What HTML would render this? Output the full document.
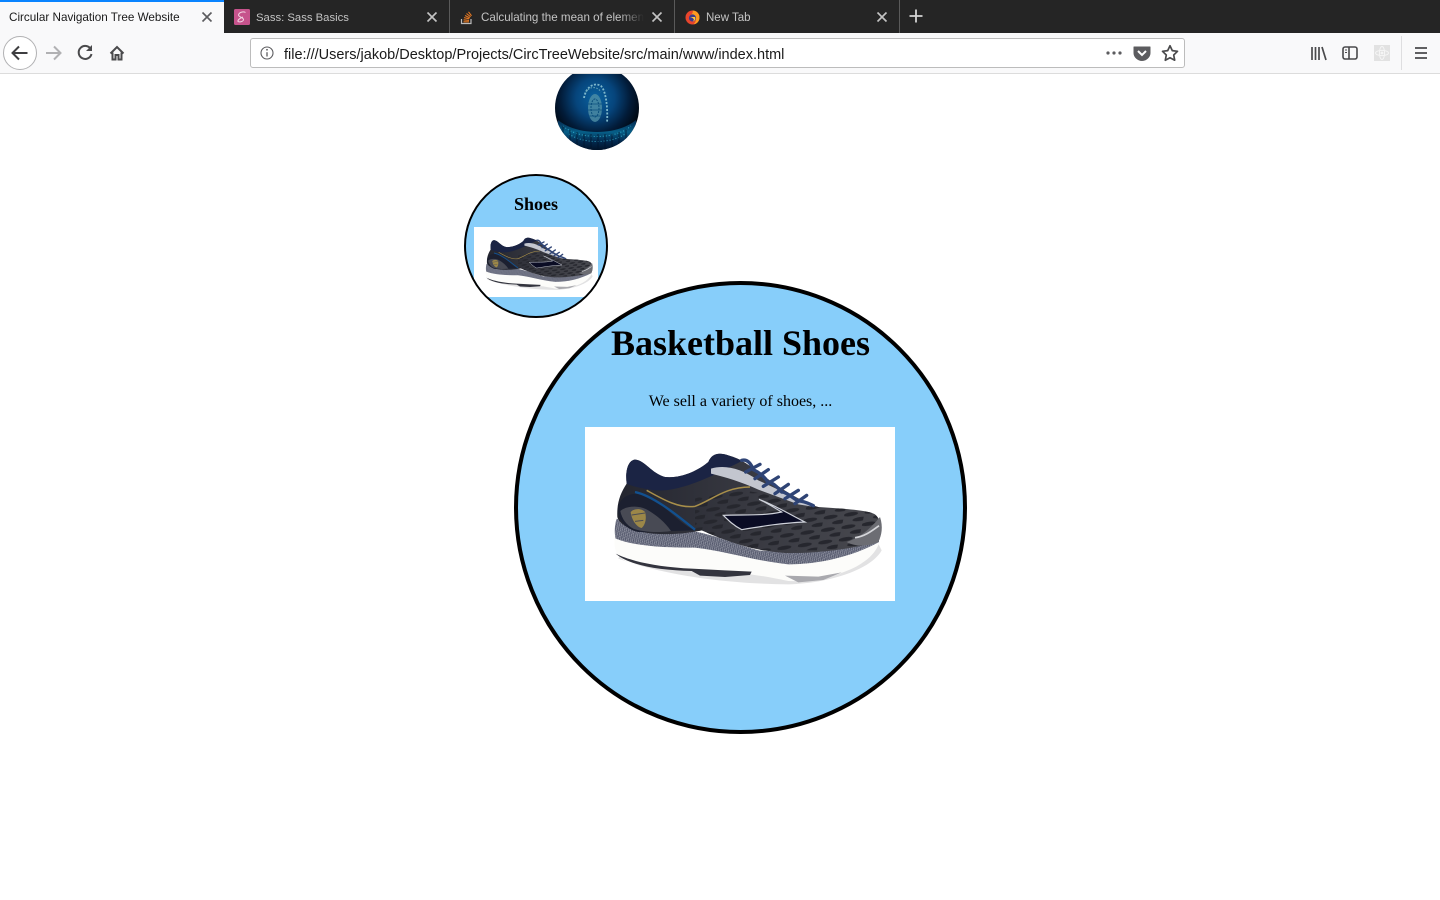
<!DOCTYPE html>
<html>
<head>
<meta charset="utf-8">
<title>Circular Navigation Tree Website</title>
<style>
html,body{margin:0;padding:0;width:1440px;height:900px;overflow:hidden;background:#fff}
body{position:relative;font-family:"Liberation Serif",serif;color:#000}
.abs{position:absolute}
.chrome{font-family:"Liberation Sans",sans-serif}
#strip{left:0;top:0;width:1440px;height:33px;background:#252525}
#tab1{left:0;top:0;width:224px;height:33px;background:#f9f9fa}
#tab1line{left:0;top:0;width:224px;height:2px;background:#0a84ff}
.tabt{position:absolute;top:11px;font-size:11.5px;line-height:14px;white-space:nowrap;color:#c4c4c4}
.sep{position:absolute;top:0;width:1px;height:33px;background:#5a5a5a}
#nav{left:0;top:33px;width:1440px;height:40px;background:#f9f9fa}
#navb{left:0;top:73px;width:1440px;height:1px;background:#dcdcdc;z-index:5}
#url{left:250px;top:38px;width:933px;height:28px;background:#fff;border:1px solid #bcbcbc;border-radius:3px}
#urlt{left:284px;top:47px;font-size:14.5px;line-height:17px;color:#1a1a1a;white-space:nowrap}
.c{position:absolute;border-radius:50%;background:#87cefa;border-style:solid;border-color:#000;box-sizing:border-box}
#big{left:514px;top:281px;width:453px;height:453px;border-width:4px}
#small{left:464px;top:174px;width:144px;height:144px;border-width:2px;overflow:hidden}
h1{position:absolute;margin:0;left:514px;width:453px;top:322px;text-align:center;font-size:36px;line-height:42px;font-weight:bold}
p{position:absolute;margin:0;left:514px;width:453px;top:392px;text-align:center;font-size:16px;line-height:19px}
h3{position:absolute;margin:0;left:464px;width:144px;top:193px;text-align:center;font-size:18px;line-height:22px;font-weight:bold}
.shoe{position:absolute;background:#fff;display:block}
#top{left:555px;top:66px;z-index:1}
svg{display:block}
</style>
</head>
<body>
<svg width="0" height="0" style="position:absolute">
<defs>
<linearGradient id="up" x1="0" x2="1" y1="0" y2="0"><stop offset="0" stop-color="#23252f"/><stop offset=".5" stop-color="#383941"/><stop offset="1" stop-color="#48494f"/></linearGradient>
<pattern id="mid" width="12" height="9" patternUnits="userSpaceOnUse" patternTransform="rotate(12)"><rect width="12" height="9" fill="#666a7c"/><path d="M0 2.5h6M6 7h6" stroke="#c4c6ce" stroke-width="2.5"/><path d="M3 0v4M9 4v5" stroke="#252a44" stroke-width="2"/></pattern>
<pattern id="cells" width="62" height="36" patternUnits="userSpaceOnUse" patternTransform="rotate(-8) skewX(-20)"><ellipse cx="20" cy="10" rx="22" ry="6" fill="#26272e"/><ellipse cx="51" cy="28" rx="22" ry="6" fill="#26272e"/></pattern>
<clipPath id="upclip"><path d="M97 270C95 230 105 200 125 170C120 130 130 100 150 98C180 100 200 140 240 150C290 155 340 130 370 105C380 80 400 75 430 85C470 95 500 120 540 150C590 185 640 220 700 240C780 245 850 250 870 262C890 280 895 310 880 345C800 365 700 380 600 378C500 370 430 345 350 310C280 325 200 325 150 310C120 300 100 285 97 270Z"/></clipPath>
<radialGradient id="glow" cx=".48" cy=".38" r=".58"><stop offset="0" stop-color="#0a62a0"/><stop offset=".4" stop-color="#06457c"/><stop offset=".72" stop-color="#021b38"/><stop offset="1" stop-color="#00040a"/></radialGradient>
<linearGradient id="floor" x1="0" x2="0" y1="0" y2="1"><stop offset="0" stop-color="#04284e"/><stop offset=".4" stop-color="#075f88"/><stop offset=".7" stop-color="#032a50"/><stop offset="1" stop-color="#01132a"/></linearGradient>
<symbol id="shoeart" viewBox="0 0 930 525">
<path d="M100 395C240 445 420 470 610 472C740 468 860 425 890 370L880 350L110 370Z" fill="#d8d8da" opacity=".75"/>
<path d="M90 325C84 362 92 390 130 406C220 430 320 428 420 436C500 440 540 448 610 462C680 466 765 445 815 418C850 398 872 378 884 345L600 372L300 330Z" fill="#fcfcfa"/>
<path d="M92 380C130 414 220 430 320 432L345 446L420 450L495 444L500 434L420 430L320 425C220 420 140 404 92 380Z" fill="#33343e"/>
<path d="M600 446L640 466L715 459L770 436L700 449Z" fill="#a9a9ae"/>
<path d="M95 275C88 295 88 320 92 335C150 358 240 362 330 362C420 372 500 400 610 412C700 412 800 390 882 345L880 330C760 355 620 380 520 370C430 345 370 315 300 310C220 315 150 310 95 275Z" fill="url(#mid)"/>
<path d="M97 270C95 230 105 200 125 170C120 130 130 100 150 98C180 100 200 140 240 150C290 155 340 130 370 105C380 80 400 75 430 85C470 95 500 120 540 150C590 185 640 220 700 240C780 245 850 250 870 262C890 280 895 310 880 345C800 365 700 380 600 378C500 370 430 345 350 310C280 325 200 325 150 310C120 300 100 285 97 270Z" fill="url(#up)"/>
<g clip-path="url(#upclip)"><path d="M330 215C420 180 520 180 620 235L880 250V370L500 370L330 310Z" fill="url(#cells)"/></g>
<path d="M125 170C120 130 130 100 150 98C180 100 200 140 240 150C290 155 340 130 370 105C380 80 400 75 430 85L470 100C470 105 420 125 395 140C340 165 270 195 210 190C175 185 145 180 125 170Z" fill="#1b2444"/>
<path d="M378 125C420 112 470 125 520 160L690 240L640 232L520 188C470 165 420 150 378 140Z" fill="#c3c6cf"/>
<path d="M470 100C490 95 500 115 505 128M505 128C520 135 540 150 548 165M548 165C565 165 580 185 590 195M590 195C605 195 625 215 640 222M640 222C660 222 675 232 685 236M482 135L525 112M510 155L550 128M535 178L580 150M570 200L610 172M600 215L640 190M630 230L665 205" stroke="#2f4475" stroke-width="10" stroke-linecap="round" fill="none"/>
<path d="M185 190C230 215 280 245 330 238C380 220 420 180 495 180" stroke="#a88f4a" stroke-width="4.5" fill="none"/>
<path d="M100 235C95 270 115 305 160 315L330 310C280 290 240 230 180 205C150 195 115 200 100 235Z" fill="#1c2030"/>
<path d="M106 252C125 235 165 235 190 250C215 265 240 285 258 312C220 318 170 315 145 305C125 295 110 275 106 252Z" fill="#484a54"/>
<path d="M150 195C200 205 265 255 330 308" stroke="#12508f" stroke-width="7" fill="none"/>
<path d="M137 255C150 242 172 245 180 255C186 275 180 295 170 303C155 300 140 280 137 255Z" fill="#9c8748"/><path d="M140 264L180 258M150 283L175 280" stroke="#4a4c55" stroke-width="3"/>
<path d="M415 265C470 262 530 268 590 255C565 240 540 225 522 217C570 235 620 265 660 285C590 288 530 298 470 308C445 295 430 280 415 265Z" fill="#0a0c24" stroke="#cfd2da" stroke-width="3.5"/>
<path d="M785 345C830 330 860 300 885 270C895 300 890 325 880 345C850 358 810 360 785 345Z" fill="#6c6d73"/>
<path d="M810 332C840 328 860 312 882 296" stroke="#d5d6da" stroke-width="5" fill="none"/>
</symbol>
</defs>
</svg>

<div class="abs" id="top">
<svg width="84" height="84" viewBox="0 0 84 84">
<defs><clipPath id="cl"><circle cx="42" cy="42" r="42"/></clipPath></defs>
<g clip-path="url(#cl)">
<rect width="84" height="84" fill="url(#glow)"/>
<path d="M3 54C22 70 62 70 81 54V84H3Z" fill="url(#floor)"/>
<path d="M8 60C24 74 60 74 76 60M14 68C28 78 56 78 70 68" stroke="#3cc2da" stroke-width="1" stroke-dasharray="1 2" fill="none" opacity=".8"/>
<path d="M8 60V76M15 64V80M22 66V84M29 68V84M36 68V84M43 68V84M50 68V84M57 68V84M64 66V84M71 63V78" stroke="#02142c" stroke-width="1.2" opacity=".6"/>
<ellipse cx="40" cy="42" rx="7" ry="14" fill="#4f8ea5" opacity=".8"/>
<ellipse cx="40" cy="42" rx="4" ry="9" fill="none" stroke="#0a4e7c" stroke-width="1" stroke-dasharray="2 1"/>
<path d="M33 38H47M33 44H47M34 50H46" stroke="#0a4e7c" stroke-width=".8"/>
<path d="M29 32C31 20 40 16 46 20C51 25 53 42 52 57" stroke="#7fb8cc" stroke-width="1.8" stroke-dasharray="2 1.5" fill="none"/>
<path d="M31 26C35 20 42 20 46 26" stroke="#5d9eb3" stroke-width="1.2" stroke-dasharray="1.5 1.5" fill="none"/>
</g>
</svg>
</div>

<div class="c" id="small">
<svg class="shoe" style="left:8px;top:51px" width="124" height="70"><use href="#shoeart" width="124" height="70"/></svg>
</div>
<h3>Shoes</h3>

<div class="c" id="big"></div>
<h1>Basketball Shoes</h1>
<p>We sell a variety of shoes, ...</p>
<svg class="shoe" style="left:585px;top:427px" width="310" height="174"><use href="#shoeart" width="310" height="175"/></svg>

<div class="abs chrome" id="strip" style="z-index:6">
<div class="abs" id="tab1"></div><div class="abs" id="tab1line"></div>
<div class="tabt" style="left:9px;color:#1a1a1a;font-size:11.7px">Circular Navigation Tree Website</div>
<svg class="abs" style="left:201px;top:11px" width="12" height="12"><path d="M1.5 1.5L10.5 10.5M10.5 1.5L1.5 10.5" stroke="#5c5c5f" stroke-width="1.6"/></svg>
<svg class="abs" style="left:234px;top:9px" width="16" height="16"><rect width="16" height="16" rx="1.5" fill="#c6538c"/><path d="M11.5 3.5C9 2 5 3.5 4.5 6C4.5 8 9.5 8.5 9.5 10.5C9.5 12.5 5.5 13.5 4 12.5C3.5 11 6 9 9 8" stroke="#f2d5e3" stroke-width="1" fill="none"/></svg>
<div class="tabt" style="left:256px;font-size:11.3px">Sass: Sass Basics</div>
<svg class="abs" style="left:426px;top:11px" width="12" height="12"><path d="M1.5 1.5L10.5 10.5M10.5 1.5L1.5 10.5" stroke="#c4c4c4" stroke-width="1.6"/></svg>
<div class="sep" style="left:449px"></div>
<svg class="abs" style="left:460px;top:9px" width="14" height="16"><path d="M1.5 10V14.5H11V10" stroke="#bcbbbb" stroke-width="1.2" fill="none"/><path d="M3.5 12.8H9M3.6 10.8L9 11.4M4 8.6L9.2 9.8M5 6.5L9.8 8.9M6.5 4.5L10.6 7.8M8.5 2.8L11.5 6.8" stroke="#e87922" stroke-width="1.1"/></svg>
<div class="tabt" style="left:481px;width:163px;overflow:hidden;font-size:11.6px;-webkit-mask-image:linear-gradient(to right,#000 85%,transparent)">Calculating the mean of elements</div>
<svg class="abs" style="left:651px;top:11px" width="12" height="12"><path d="M1.5 1.5L10.5 10.5M10.5 1.5L1.5 10.5" stroke="#c4c4c4" stroke-width="1.6"/></svg>
<div class="sep" style="left:674px"></div>
<svg class="abs" style="left:685px;top:9px" width="15" height="16"><circle cx="7.5" cy="8.5" r="7" fill="#e8452c"/><path d="M7.5 1.5A7 7 0 0 1 14.5 8.5C14.5 12 12 15 8.5 15.3C11 13.5 11.5 10 9.5 8C8.5 7 6.5 7 6 6C7 4.5 8.5 3.5 7.5 1.5Z" fill="#ff9a1f"/><circle cx="7.5" cy="9" r="3.6" fill="#3d3a8c"/><path d="M5 8H10C11 10 10 12 7.5 12.5C10 11 9 9 5 8Z" fill="#ffcb3a"/></svg>
<div class="tabt" style="left:706px">New Tab</div>
<svg class="abs" style="left:876px;top:11px" width="12" height="12"><path d="M1.5 1.5L10.5 10.5M10.5 1.5L1.5 10.5" stroke="#c4c4c4" stroke-width="1.6"/></svg>
<div class="sep" style="left:899px"></div>
<svg class="abs" style="left:908px;top:8px" width="16" height="16"><path d="M8 1.5V14.5M1.5 8H14.5" stroke="#d4d4d4" stroke-width="1.8"/></svg>
</div>

<div class="abs chrome" id="nav" style="z-index:6"></div>
<div class="abs" id="navb"></div>
<div class="abs chrome" id="url" style="z-index:7"></div>
<div class="abs chrome" id="urlt" style="z-index:8">file:///Users/jakob/Desktop/Projects/CircTreeWebsite/src/main/www/index.html</div>

<svg class="abs" style="left:0;top:33px;z-index:8" width="1440" height="41" viewBox="0 33 1440 41">
<circle cx="20" cy="53" r="16.5" fill="#fff" stroke="#b1b1b3"/>
<path d="M27.5 53H13M19 46.5L12.5 53L19 59.5" fill="none" stroke="#3e3e40" stroke-width="2"/>
<path d="M60.5 53H46M54 46.5L60.5 53L54 59.5" fill="none" stroke="#b1b1b3" stroke-width="2"/>
<path d="M91 49.5A6.5 6.5 0 1 0 91.5 54" fill="none" stroke="#4a4a4c" stroke-width="2"/>
<path d="M92 45V51H86Z" fill="#4a4a4c"/>
<path d="M110.5 53.5L117 47L123.5 53.5M112.5 52.5V59.5H115.5V55H118.5V59.5H121.5V52.5" fill="none" stroke="#4a4a4c" stroke-width="2"/>
<circle cx="267" cy="53" r="6" fill="none" stroke="#5c5c5f" stroke-width="1.1"/>
<path d="M267 52.2V56.5" stroke="#5c5c5f" stroke-width="1.3"/><circle cx="267" cy="49.8" r=".9" fill="#5c5c5f"/>
<circle cx="1108" cy="53" r="1.6" fill="#5c5c5f"/><circle cx="1114" cy="53" r="1.6" fill="#5c5c5f"/><circle cx="1120" cy="53" r="1.6" fill="#5c5c5f"/>
<path d="M1134 47H1150V53C1150 57 1146 60.5 1142 60.5C1138 60.5 1134 57 1134 53Z" fill="#5c5c5f" stroke="#5c5c5f" stroke-linejoin="round" stroke-width="1"/>
<path d="M1138 51L1142 55L1146 51" fill="none" stroke="#fff" stroke-width="2"/>
<path d="M1170 45.8L1172.3 50.6L1177.5 51.3L1173.7 55L1174.7 60.2L1170 57.7L1165.3 60.2L1166.3 55L1162.5 51.3L1167.7 50.6Z" fill="none" stroke="#4a4a4c" stroke-width="1.7" stroke-linejoin="round"/>
<path d="M1312 47V60M1315.5 47V60M1319 47V60M1322 47L1326 60" stroke="#4a4a4c" stroke-width="1.7" fill="none"/>
<rect x="1343" y="47" width="14" height="12" rx="2" fill="none" stroke="#4a4a4c" stroke-width="1.6"/>
<path d="M1349 47V59" stroke="#4a4a4c" stroke-width="1.6"/><path d="M1345 50H1347M1345 52.5H1347" stroke="#4a4a4c" stroke-width="1"/>
<rect x="1374" y="45" width="16" height="16" fill="#e2e2e2"/>
<ellipse cx="1382" cy="53" rx="6.5" ry="2.6" fill="none" stroke="#f5f5f5"/><ellipse cx="1382" cy="53" rx="2.6" ry="6.5" fill="none" stroke="#f5f5f5"/><circle cx="1382" cy="53" r="1.4" fill="#f5f5f5"/>
<path d="M1401.5 36V70" stroke="#dedee0"/>
<path d="M1415 48H1427M1415 53H1427M1415 58H1427" stroke="#4a4a4c" stroke-width="1.8"/>
</svg>
</body>
</html>
